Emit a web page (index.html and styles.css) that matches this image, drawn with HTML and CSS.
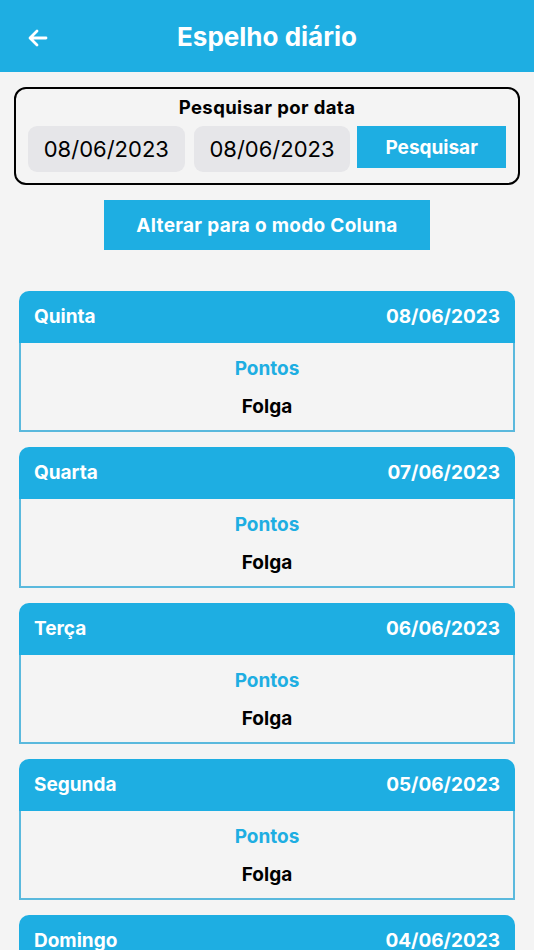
FILE: index.html
```html
<!DOCTYPE html>
<html lang="pt">
<head>
<meta charset="utf-8">
<link rel="stylesheet" href="styles.css">
</head>
<body>
<header class="topbar">
  <svg class="back" viewBox="0 0 24 24" width="24" height="24"><path d="M20 12H5M11 5l-7 7 7 7" fill="none" stroke="#fff" stroke-width="2.8" stroke-linecap="round" stroke-linejoin="round"/></svg>
  <h1 class="title">Espelho diário</h1>
</header>
<main class="content">
  <section class="search">
    <div class="search-label">Pesquisar por data</div>
    <div class="search-row">
      <div class="date">08/06/2023</div>
      <div class="date">08/06/2023</div>
      <div class="btn-search">Pesquisar</div>
    </div>
  </section>
  <div class="toggle">Alterar para o modo Coluna</div>
  <div class="cards">
    <div class="card">
      <div class="card-head"><span>Quinta</span><span>08/06/2023</span></div>
      <div class="card-body"><div class="pontos">Pontos</div><div class="folga">Folga</div></div>
    </div>
    <div class="card">
      <div class="card-head"><span>Quarta</span><span>07/06/2023</span></div>
      <div class="card-body"><div class="pontos">Pontos</div><div class="folga">Folga</div></div>
    </div>
    <div class="card">
      <div class="card-head"><span>Terça</span><span>06/06/2023</span></div>
      <div class="card-body"><div class="pontos">Pontos</div><div class="folga">Folga</div></div>
    </div>
    <div class="card">
      <div class="card-head"><span>Segunda</span><span>05/06/2023</span></div>
      <div class="card-body"><div class="pontos">Pontos</div><div class="folga">Folga</div></div>
    </div>
    <div class="card">
      <div class="card-head"><span>Domingo</span><span>04/06/2023</span></div>
      <div class="card-body"><div class="pontos">Pontos</div><div class="folga">Folga</div></div>
    </div>
  </div>
</main>
</body>
</html>
```
FILE: styles.css
```css
* { box-sizing: border-box; }
html, body { margin: 0; padding: 0; }
body {
  background: #f4f4f4;
  font-family: Inter, Roboto, "Liberation Sans", sans-serif;
  width: 534px;
  height: 950px;
  overflow: hidden;
}
.topbar {
  height: 72px;
  background: #1eaee2;
  display: flex;
  align-items: center;
  justify-content: center;
  position: relative;
}
.back {
  position: absolute;
  left: 26px;
  top: 26px;
}
.title {
  margin: 0;
  color: #fff;
  font-size: 26px;
  font-weight: 700;
  letter-spacing: 0;
}
.content {
  padding: 15px 14px 0 14px;
}
.search {
  border: 2px solid #000;
  border-radius: 12px;
  height: 98px;
  padding: 7px 12px 0 12px;
}
.search-label {
  text-align: center;
  font-weight: 700;
  font-size: 18.5px;
  color: #000;
  line-height: 22px;
  letter-spacing: 0.4px;
}
.search-row {
  display: flex;
  gap: 9px;
  margin-top: 8px;
  align-items: flex-start;
}
.date {
  width: 157px;
  height: 46px;
  background: #e6e6e9;
  border-radius: 9px;
  font-size: 22px;
  color: #000;
  display: flex;
  align-items: center;
  justify-content: center;
}
.btn-search {
  width: 149px;
  height: 42px;
  margin-left: -2px;
  background: #1eaee2;
  color: #fff;
  font-weight: 700;
  font-size: 19px;
  display: flex;
  align-items: center;
  justify-content: center;
}
.toggle {
  margin: 15px auto 0 90px;
  width: 326px;
  height: 50px;
  background: #1eaee2;
  color: #fff;
  font-weight: 700;
  font-size: 19px;
  letter-spacing: 0.3px;
  display: flex;
  align-items: center;
  justify-content: center;
}
.cards {
  margin-top: 41px;
  padding: 0 5px;
  display: flex;
  flex-direction: column;
  gap: 15px;
}
.card {
  height: 141px;
  display: flex;
  flex-direction: column;
}
.card-head {
  height: 52px;
  background: #1eaee2;
  border-radius: 10px 10px 0 0;
  display: flex;
  justify-content: space-between;
  align-items: center;
  padding: 0 15px 1px 15px;
  color: #fff;
  font-weight: 700;
  font-size: 19px;
  flex-shrink: 0;
}
.card-body {
  flex: 1;
  border: 2px solid #5ab9dd;
  border-top: none;
  text-align: center;
  padding-top: 14px;
}
.pontos {
  color: #1eaee2;
  font-weight: 700;
  font-size: 19px;
  line-height: 24px;
}
.folga {
  color: #000;
  font-weight: 700;
  font-size: 19px;
  line-height: 24px;
  margin-top: 14px;
}
```
